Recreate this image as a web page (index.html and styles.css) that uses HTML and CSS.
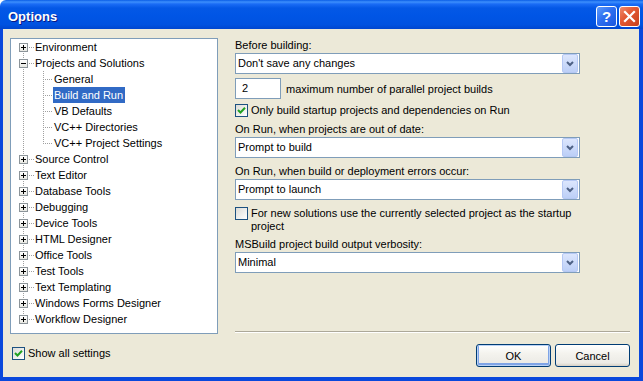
FILE: index.html
```html
<!DOCTYPE html>
<html lang="en">
<head>
    <meta charset="UTF-8">
    <meta name="viewport" content="width=device-width, initial-scale=1.0">
    <title>Options</title>
    <link rel="stylesheet" href="styles.css">
</head>
<body>
    <div class="window">
        <div class="titlebar">
            <span class="title">Options</span>
            <span class="caption-btn help">?</span>
            <span class="caption-btn close">
                <svg width="19" height="19" viewBox="0 0 19 19"><path d="M5 5 L14 14 M14 5 L5 14" stroke="#fff" stroke-width="2.2" stroke-linecap="square"/></svg>
            </span>
        </div>

        <div class="frame">
            <div class="main">
                <ul class="tree">
                    <li class="node first"><span class="twig"><span class="expander plus"></span></span><span class="label">Environment</span></li>
                    <li class="node"><span class="twig"><span class="expander minus"></span></span><span class="label">Projects and Solutions</span></li>
                    <li class="node child"><span class="twig"></span><span class="label">General</span></li>
                    <li class="node child"><span class="twig"></span><span class="label selected">Build and Run</span></li>
                    <li class="node child"><span class="twig"></span><span class="label">VB Defaults</span></li>
                    <li class="node child"><span class="twig"></span><span class="label">VC++ Directories</span></li>
                    <li class="node child last"><span class="twig"></span><span class="label">VC++ Project Settings</span></li>
                    <li class="node"><span class="twig"><span class="expander plus"></span></span><span class="label">Source Control</span></li>
                    <li class="node"><span class="twig"><span class="expander plus"></span></span><span class="label">Text Editor</span></li>
                    <li class="node"><span class="twig"><span class="expander plus"></span></span><span class="label">Database Tools</span></li>
                    <li class="node"><span class="twig"><span class="expander plus"></span></span><span class="label">Debugging</span></li>
                    <li class="node"><span class="twig"><span class="expander plus"></span></span><span class="label">Device Tools</span></li>
                    <li class="node"><span class="twig"><span class="expander plus"></span></span><span class="label">HTML Designer</span></li>
                    <li class="node"><span class="twig"><span class="expander plus"></span></span><span class="label">Office Tools</span></li>
                    <li class="node"><span class="twig"><span class="expander plus"></span></span><span class="label">Test Tools</span></li>
                    <li class="node"><span class="twig"><span class="expander plus"></span></span><span class="label">Text Templating</span></li>
                    <li class="node"><span class="twig"><span class="expander plus"></span></span><span class="label">Windows Forms Designer</span></li>
                    <li class="node last"><span class="twig"><span class="expander plus"></span></span><span class="label">Workflow Designer</span></li>
                </ul>

                <div class="settings">
                    <div class="field-label">Before building:</div>
                    <div class="combo">
                        <span class="value">Don't save any changes</span>
                        <span class="drop"><svg width="8" height="6" viewBox="0 0 8 6"><path d="M1 1 L4 4 L7 1" fill="none" stroke="#4d6185" stroke-width="2"/></svg></span>
                    </div>

                    <div class="spin-row">
                        <span class="number">2</span>
                        <span class="spin-label">maximum number of parallel project builds</span>
                    </div>

                    <div class="check-row first-check">
                        <span class="checkbox checked"><svg width="11" height="11" viewBox="0 0 11 11"><path d="M2 5 L4.5 7.5 L9 2.8" fill="none" stroke="#21a121" stroke-width="2"/></svg></span>
                        <span class="check-text">Only build startup projects and dependencies on Run</span>
                    </div>

                    <div class="field-label gap-5">On Run, when projects are out of date:</div>
                    <div class="combo">
                        <span class="value">Prompt to build</span>
                        <span class="drop"><svg width="8" height="6" viewBox="0 0 8 6"><path d="M1 1 L4 4 L7 1" fill="none" stroke="#4d6185" stroke-width="2"/></svg></span>
                    </div>

                    <div class="field-label gap-6">On Run, when build or deployment errors occur:</div>
                    <div class="combo">
                        <span class="value">Prompt to launch</span>
                        <span class="drop"><svg width="8" height="6" viewBox="0 0 8 6"><path d="M1 1 L4 4 L7 1" fill="none" stroke="#4d6185" stroke-width="2"/></svg></span>
                    </div>

                    <div class="check-row wrap-check">
                        <span class="checkbox"></span>
                        <span class="check-text">For new solutions use the currently selected project as the startup project</span>
                    </div>

                    <div class="field-label gap-4">MSBuild project build output verbosity:</div>
                    <div class="combo">
                        <span class="value">Minimal</span>
                        <span class="drop"><svg width="8" height="6" viewBox="0 0 8 6"><path d="M1 1 L4 4 L7 1" fill="none" stroke="#4d6185" stroke-width="2"/></svg></span>
                    </div>

                    <div class="separator"></div>
                </div>
            </div>

            <div class="footer">
                <div class="check-row show-all">
                    <span class="checkbox checked"><svg width="11" height="11" viewBox="0 0 11 11"><path d="M2 5 L4.5 7.5 L9 2.8" fill="none" stroke="#21a121" stroke-width="2"/></svg></span>
                    <span class="check-text">Show all settings</span>
                </div>
                <div class="button-container">
                    <button class="default">OK</button>
                    <button>Cancel</button>
                </div>
            </div>
        </div>
    </div>
</body>
</html>
```

FILE: styles.css
```css
* {
    box-sizing: border-box;
}
body {
    margin: 0;
    font-family: "Liberation Sans", Arial, sans-serif;
    font-size: 11px;
    color: #000;
    background: #fff;
}
.window {
    width: 643px;
    height: 381px;
    display: flex;
    flex-direction: column;
}

/* title bar */
.titlebar {
    flex: none;
    height: 29px;
    display: flex;
    align-items: flex-start;
    padding: 6px 3px 0 8px;
    border-top-left-radius: 6px;
    background: linear-gradient(to bottom, #0a5de6 0, #3d8ffc 2px, #1a6cf5 4px, #0458e6 8px, #0055e5 55%, #0052e0 85%, #0046cf 100%);
}
.title {
    margin-top: 3px;
    font-size: 13px;
    line-height: 16px;
    font-weight: bold;
    color: #fff;
    text-shadow: 1px 1px #0a1883;
}
.caption-btn {
    width: 21px;
    height: 21px;
    border: 1px solid #fff;
    border-radius: 3px;
    display: flex;
    align-items: center;
    justify-content: center;
    color: #fff;
}
.help {
    margin-left: auto;
    margin-right: 2px;
    font-size: 15px;
    font-weight: bold;
    background: linear-gradient(135deg, #5d9bfa 0%, #2f6ff0 45%, #1b56de 100%);
}
.close {
    background: linear-gradient(135deg, #ef8a6d 0%, #e35a35 40%, #c8401c 100%);
}

/* window body */
.frame {
    flex: 1;
    display: flex;
    flex-direction: column;
    padding: 9px 9px 0 7px;
    background-color: #ece9d8;
    border: solid #0a48dc;
    border-width: 0 4px 4px 3px;
}
.main {
    display: flex;
    gap: 17px;
    height: 296px;
}

/* tree */
.tree {
    list-style: none;
    margin: 0;
    padding: 0;
    width: 208px;
    flex: none;
    background: #fff;
    border: 1px solid #7f9db9;
}
.node {
    display: flex;
    height: 16px;
    line-height: 16px;
    white-space: nowrap;
}
.twig {
    flex: none;
    width: 23px;
    height: 16px;
    background:
        repeating-linear-gradient(to right, #a0a0a0 0 1px, transparent 1px 2px) 12px 8px / 11px 1px no-repeat,
        repeating-linear-gradient(#a0a0a0 0 1px, transparent 1px 2px) 12px 0 / 1px 16px no-repeat;
}
.node.first .twig {
    background:
        repeating-linear-gradient(to right, #a0a0a0 0 1px, transparent 1px 2px) 12px 8px / 11px 1px no-repeat,
        repeating-linear-gradient(#a0a0a0 0 1px, transparent 1px 2px) 12px 8px / 1px 8px no-repeat;
}
.node.last .twig {
    background:
        repeating-linear-gradient(to right, #a0a0a0 0 1px, transparent 1px 2px) 12px 8px / 11px 1px no-repeat,
        repeating-linear-gradient(#a0a0a0 0 1px, transparent 1px 2px) 12px 0 / 1px 9px no-repeat;
}
.node.child .twig {
    width: 42px;
    background:
        repeating-linear-gradient(to right, #a0a0a0 0 1px, transparent 1px 2px) 32px 8px / 10px 1px no-repeat,
        repeating-linear-gradient(#a0a0a0 0 1px, transparent 1px 2px) 12px 0 / 1px 16px no-repeat,
        repeating-linear-gradient(#a0a0a0 0 1px, transparent 1px 2px) 32px 0 / 1px 16px no-repeat;
}
.node.child.last .twig {
    background:
        repeating-linear-gradient(to right, #a0a0a0 0 1px, transparent 1px 2px) 32px 8px / 10px 1px no-repeat,
        repeating-linear-gradient(#a0a0a0 0 1px, transparent 1px 2px) 12px 0 / 1px 16px no-repeat,
        repeating-linear-gradient(#a0a0a0 0 1px, transparent 1px 2px) 32px 0 / 1px 9px no-repeat;
}
.expander {
    display: block;
    width: 9px;
    height: 9px;
    margin: 4px 0 0 8px;
    border: 1px solid #8c9499;
}
.expander.plus {
    background:
        linear-gradient(#000, #000) center / 5px 1px no-repeat,
        linear-gradient(#000, #000) center / 1px 5px no-repeat,
        linear-gradient(#fff, #e8e8e2);
}
.expander.minus {
    background:
        linear-gradient(#000, #000) center / 5px 1px no-repeat,
        linear-gradient(#fff, #e8e8e2);
}
.label {
    padding: 0 2px 0 1px;
}
.label.selected {
    background-color: #316ac5;
    color: #fff;
}

/* settings */
.settings {
    flex: 1;
    display: flex;
    flex-direction: column;
}
.field-label {
    line-height: 14px;
}
.gap-4 {
    margin-top: 4px;
}
.gap-5 {
    margin-top: 5px;
}
.gap-6 {
    margin-top: 6px;
}
.combo {
    width: 345px;
    height: 21px;
    margin-top: 1px;
    display: flex;
    align-items: stretch;
    padding-left: 2px;
    border: 1px solid #7f9db9;
    background: #fff;
}
.combo .value {
    flex: 1;
    line-height: 19px;
}
.combo .drop {
    width: 16px;
    margin-right: 1px;
    display: flex;
    align-items: center;
    justify-content: center;
    border: 1px solid #b5c8f4;
    border-radius: 2px;
    background: linear-gradient(#dce6fd, #bccff7);
}
.spin-row {
    display: flex;
    align-items: center;
    margin-top: 4px;
}
.number {
    width: 46px;
    height: 21px;
    padding-left: 6px;
    line-height: 19px;
    border: 1px solid #7f9db9;
    background: #fff;
}
.spin-label {
    margin-left: 5px;
}
.check-row {
    display: flex;
    align-items: center;
    gap: 3px;
    width: 345px;
    line-height: 13px;
}
.first-check {
    margin-top: 5px;
}
.wrap-check {
    align-items: flex-start;
    margin-top: 7px;
}
.checkbox {
    flex: none;
    width: 13px;
    height: 13px;
    display: flex;
    align-items: center;
    justify-content: center;
    border: 1px solid #1c5180;
    background: linear-gradient(135deg, #dcdcd7, #fff);
}
.separator {
    margin-top: auto;
    margin-bottom: 1px;
    height: 2px;
    border-top: 1px solid #aca899;
    border-bottom: 1px solid #fff;
}

/* footer */
.footer {
    display: flex;
    align-items: flex-start;
    padding-top: 10px;
}
.show-all {
    width: auto;
    margin: 3px 0 0 2px;
}
.button-container {
    margin-left: auto;
    display: flex;
    gap: 4px;
}
button {
    width: 75px;
    height: 23px;
    padding: 0;
    font-family: "Liberation Sans", Arial, sans-serif;
    font-size: 11px;
    color: #000;
    border: 1px solid #003c74;
    border-radius: 3px;
    background: linear-gradient(#fff 0%, #f4f3ee 40%, #ecebe6 85%, #d6d0c5 100%);
}
button.default {
    box-shadow: inset 0 0 0 1px #b9d1f5, inset 0 -1px 0 2px #7fa4e6;
}
```
